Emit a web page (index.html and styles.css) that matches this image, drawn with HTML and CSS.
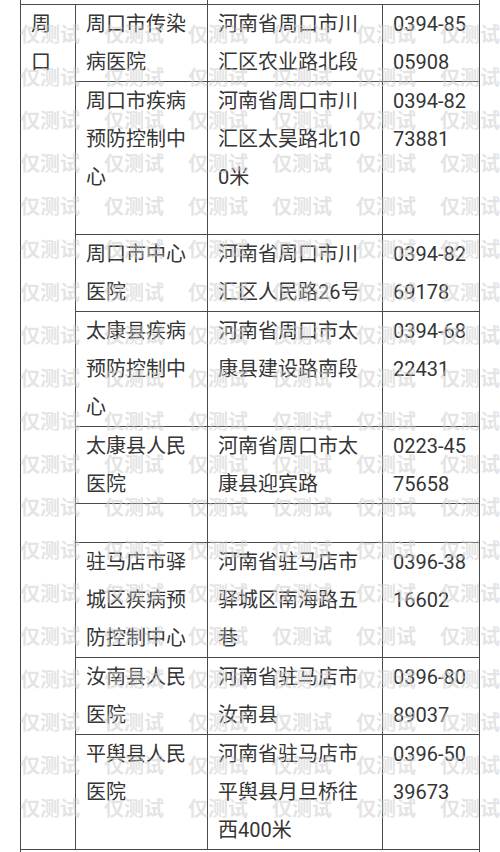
FILE: index.html
```html
<!DOCTYPE html>
<html lang="zh-CN">
<head>
<meta charset="utf-8">
<title>周口 驻马店 疾控 医院</title>
<link rel="stylesheet" href="styles.css">
</head>
<body>
<div class="page">
  <table class="list">
    <colgroup>
      <col class="c1"><col class="c2"><col class="c3"><col class="c4">
    </colgroup>
    <tr class="edge-top"><td colspan="2"></td><td colspan="2"></td></tr>
    <tr>
      <td class="city" rowspan="9">周口</td>
      <td class="name">周口市传染病医院</td>
      <td class="addr">河南省周口市川汇区农业路北段</td>
      <td class="tel">0394-8505908</td>
    </tr>
    <tr class="tall">
      <td class="name">周口市疾病预防控制中心</td>
      <td class="addr">河南省周口市川汇区太昊路北100米</td>
      <td class="tel">0394-8273881</td>
    </tr>
    <tr>
      <td class="name">周口市中心医院</td>
      <td class="addr">河南省周口市川汇区人民路26号</td>
      <td class="tel">0394-8269178</td>
    </tr>
    <tr>
      <td class="name">太康县疾病预防控制中心</td>
      <td class="addr">河南省周口市太康县建设路南段</td>
      <td class="tel">0394-6822431</td>
    </tr>
    <tr>
      <td class="name">太康县人民医院</td>
      <td class="addr">河南省周口市太康县迎宾路</td>
      <td class="tel">0223-4575658</td>
    </tr>
    <tr class="empty">
      <td class="name"></td>
      <td class="addr"></td>
      <td class="tel"></td>
    </tr>
    <tr>
      <td class="name">驻马店市驿城区疾病预防控制中心</td>
      <td class="addr">河南省驻马店市驿城区南海路五巷</td>
      <td class="tel">0396-3816602</td>
    </tr>
    <tr>
      <td class="name">汝南县人民医院</td>
      <td class="addr">河南省驻马店市汝南县</td>
      <td class="tel">0396-8089037</td>
    </tr>
    <tr>
      <td class="name">平舆县人民医院</td>
      <td class="addr">河南省驻马店市平舆县月旦桥往西400米</td>
      <td class="tel">0396-5039673</td>
    </tr>
    <tr class="edge-bottom"><td colspan="4"></td></tr>
  </table>

  <div class="watermark" aria-hidden="true">
    <div class="wm-row"><span>仅测试</span><span>仅测试</span><span>仅测试</span><span>仅测试</span><span>仅测试</span><span>仅测试</span></div>
    <div class="wm-row"><span>仅测试</span><span>仅测试</span><span>仅测试</span><span>仅测试</span><span>仅测试</span><span>仅测试</span></div>
    <div class="wm-row"><span>仅测试</span><span>仅测试</span><span>仅测试</span><span>仅测试</span><span>仅测试</span><span>仅测试</span></div>
    <div class="wm-row"><span>仅测试</span><span>仅测试</span><span>仅测试</span><span>仅测试</span><span>仅测试</span><span>仅测试</span></div>
    <div class="wm-row"><span>仅测试</span><span>仅测试</span><span>仅测试</span><span>仅测试</span><span>仅测试</span><span>仅测试</span></div>
    <div class="wm-row"><span>仅测试</span><span>仅测试</span><span>仅测试</span><span>仅测试</span><span>仅测试</span><span>仅测试</span></div>
    <div class="wm-row"><span>仅测试</span><span>仅测试</span><span>仅测试</span><span>仅测试</span><span>仅测试</span><span>仅测试</span></div>
    <div class="wm-row"><span>仅测试</span><span>仅测试</span><span>仅测试</span><span>仅测试</span><span>仅测试</span><span>仅测试</span></div>
    <div class="wm-row"><span>仅测试</span><span>仅测试</span><span>仅测试</span><span>仅测试</span><span>仅测试</span><span>仅测试</span></div>
    <div class="wm-row"><span>仅测试</span><span>仅测试</span><span>仅测试</span><span>仅测试</span><span>仅测试</span><span>仅测试</span></div>
    <div class="wm-row"><span>仅测试</span><span>仅测试</span><span>仅测试</span><span>仅测试</span><span>仅测试</span><span>仅测试</span></div>
    <div class="wm-row"><span>仅测试</span><span>仅测试</span><span>仅测试</span><span>仅测试</span><span>仅测试</span><span>仅测试</span></div>
    <div class="wm-row"><span>仅测试</span><span>仅测试</span><span>仅测试</span><span>仅测试</span><span>仅测试</span><span>仅测试</span></div>
    <div class="wm-row"><span>仅测试</span><span>仅测试</span><span>仅测试</span><span>仅测试</span><span>仅测试</span><span>仅测试</span></div>
    <div class="wm-row"><span>仅测试</span><span>仅测试</span><span>仅测试</span><span>仅测试</span><span>仅测试</span><span>仅测试</span></div>
    <div class="wm-row"><span>仅测试</span><span>仅测试</span><span>仅测试</span><span>仅测试</span><span>仅测试</span><span>仅测试</span></div>
    <div class="wm-row"><span>仅测试</span><span>仅测试</span><span>仅测试</span><span>仅测试</span><span>仅测试</span><span>仅测试</span></div>
    <div class="wm-row"><span>仅测试</span><span>仅测试</span><span>仅测试</span><span>仅测试</span><span>仅测试</span><span>仅测试</span></div>
    <div class="wm-row"><span>仅测试</span><span>仅测试</span><span>仅测试</span><span>仅测试</span><span>仅测试</span><span>仅测试</span></div>
  </div>
</div>
</body>
</html>
```
FILE: styles.css
```css
html, body {
  margin: 0;
  padding: 0;
  background: #ffffff;
}

.page {
  position: relative;
  width: 500px;
  height: 852px;
  overflow: hidden;
  background: #ffffff;
}

.list {
  margin-left: 20px;
  width: 459px;
  table-layout: fixed;
  border-collapse: collapse;
  font-family: Roboto, "Noto Sans CJK SC", sans-serif;
  font-size: 20px;
  line-height: 38px;
  color: #353535;
}

.c1 { width: 55px; }
.c2 { width: 132px; }
.c3 { width: 175px; }
.c4 { width: 97px; }

.list td {
  border: 1px solid #4a4a4a;
  vertical-align: top;
  padding: 0 10px;
  word-break: break-all;
}

.list .city { padding: 0 10px; }
.list .name { padding: 0 11px 0 10px; }
.list .addr { padding: 0 16px 0 10px; }
.list .tel { padding: 0 10px; }

.list .tall td { height: 152px; }
.list .empty td { height: 38px; }

.list .edge-top td {
  border-top: none;
  height: 4px;
  padding: 0;
  line-height: 0;
  font-size: 0;
}

.list .edge-bottom td {
  border-bottom: none;
  height: 12px;
  padding: 0;
  line-height: 0;
  font-size: 0;
}

.watermark {
  position: absolute;
  left: 0;
  top: 0;
  right: 0;
  bottom: 0;
  padding: 24px 0 0 20px;
  display: flex;
  flex-direction: column;
  pointer-events: none;
}

.wm-row {
  display: flex;
  height: 43px;
  flex: none;
}

.wm-row span {
  flex: none;
  width: 84px;
  font-family: "Noto Sans CJK SC", sans-serif;
  font-weight: 700;
  font-size: 20px;
  line-height: 20px;
  color: rgba(205, 205, 205, 0.55);
  white-space: nowrap;
}
```
